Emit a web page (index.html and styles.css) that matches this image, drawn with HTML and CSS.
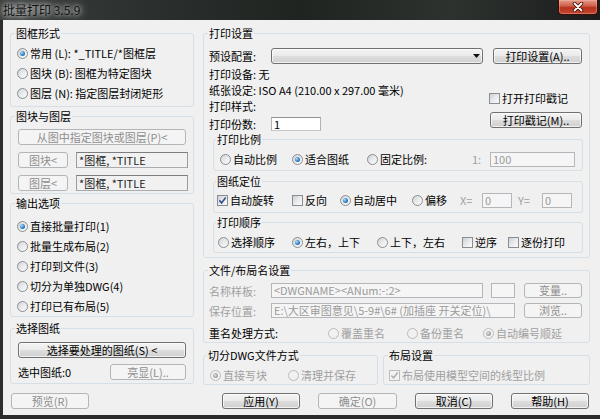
FILE: index.html
```html
<!DOCTYPE html>
<html lang="zh-CN">
<head>
<meta charset="utf-8">
<title>批量打印 3.5.9</title>
<link rel="stylesheet" href="styles.css">
</head>
<body>
<div class="window">
  <div class="titlebar">
    <span class="title">批量打印 3.5.9</span>
    <span class="close"><svg width="14" height="10" viewBox="0 0 14 10"><path d="M3.5 1.5 L10.5 8.5 M10.5 1.5 L3.5 8.5" stroke="#3b0a05" stroke-width="3.4" stroke-linecap="round"/><path d="M3.5 1.5 L10.5 8.5 M10.5 1.5 L3.5 8.5" stroke="#fff" stroke-width="1.8" stroke-linecap="round"/></svg></span>
  </div>
  <div class="frame">
    <div class="frame-left"></div>
    <div class="client">
      <div class="cols">
        <div class="col-left">
          <fieldset class="gb g1"><legend>图框形式</legend>
            <div class="gb-body">
              <div class="line20 opt"><span class="radio on"></span>常用 (L): *_TITLE/*图框层</div>
              <div class="line20 opt"><span class="radio"></span>图块 (B): 图框为特定图块</div>
              <div class="line20 opt"><span class="radio"></span>图层 (N): 指定图层封闭矩形</div>
            </div>
          </fieldset>
          <fieldset class="gb g2"><legend>图块与图层</legend>
            <div class="gb-body">
              <div class="btn dis w168">从图中指定图块或图层(P)&lt;</div>
              <div class="row16 mt7"><div class="btn dis w50">图块&lt;</div><div class="field ro w112 ml8">*图框, *TITLE</div></div>
              <div class="row16 mt7"><div class="btn dis w50">图层&lt;</div><div class="field ro w112 ml8">*图框, *TITLE</div></div>
            </div>
          </fieldset>
          <fieldset class="gb g3"><legend>输出选项</legend>
            <div class="gb-body">
              <div class="line20 opt"><span class="radio on"></span>直接批量打印(1)</div>
              <div class="line20 opt"><span class="radio"></span>批量生成布局(2)</div>
              <div class="line20 opt"><span class="radio"></span>打印到文件(3)</div>
              <div class="line20 opt"><span class="radio"></span>切分为单独DWG(4)</div>
              <div class="line20 opt"><span class="radio"></span>打印已有布局(5)</div>
            </div>
          </fieldset>
          <fieldset class="gb g4"><legend>选择图纸</legend>
            <div class="gb-body">
              <div class="btn w168">选择要处理的图纸(S) &lt;</div>
              <div class="row16 mt6"><span class="w92">选中图纸:0</span><div class="btn dis w76">亮显(L)..</div></div>
            </div>
          </fieldset>
        </div>
        <div class="col-right">
          <fieldset class="gb ps"><legend>打印设置</legend>
            <div class="gb-body">
              <div class="row16">
                <span class="lbl">预设配置:</span>
                <div class="combo w212"><svg width="7" height="4" viewBox="0 0 7 4"><path d="M0 0 H7 L3.5 4 Z" fill="#111"/></svg></div>
                <div class="btn w89 ml10">打印设置(A)..</div>
              </div>
              <div class="mid">
                <div class="mid-left">
                  <div class="ln16 mt2">打印设备: 无</div>
                  <div class="ln16">纸张设定: ISO A4 (210.00 x 297.00 毫米)</div>
                  <div class="ln16">打印样式:</div>
                  <div class="row14 mt3"><span class="lbl">打印份数:</span><div class="field w50 h14">1</div></div>
                </div>
                <div class="mid-right">
                  <div class="row14 mt27 opt"><span class="check"></span>打开打印戳记</div>
                  <div class="btn w92 ml1 mt7">打印戳记(M)..</div>
                </div>
              </div>
              <fieldset class="gb sub sg1"><legend>打印比例</legend>
                <div class="gb-body">
                  <div class="row16">
                    <div class="opt w72"><span class="radio"></span>自动比例</div>
                    <div class="opt w75"><span class="radio on"></span>适合图纸</div>
                    <div class="opt w105"><span class="radio"></span>固定比例:</div>
                    <span class="dis-text w18">1:</span>
                    <div class="field dis w85 h15">100</div>
                  </div>
                </div>
              </fieldset>
              <fieldset class="gb sub sg2"><legend>图纸定位</legend>
                <div class="gb-body">
                  <div class="row16">
                    <div class="opt w75"><span class="check"><svg width="9" height="9" viewBox="0 0 9 9"><path d="M1.4 4.4 L3.6 6.9 L7.7 1.5" stroke="#34508f" stroke-width="1.6" fill="none"/></svg></span>自动旋转</div>
                    <div class="opt w48"><span class="check"></span>反向</div>
                    <div class="opt w72"><span class="radio on"></span>自动居中</div>
                    <div class="opt w48"><span class="radio"></span>偏移</div>
                    <span class="dis-text w22">X=</span>
                    <div class="field dis w30 h15">0</div>
                    <span class="dis-text w30 pl6">Y=</span>
                    <div class="field dis w30 h15">0</div>
                  </div>
                </div>
              </fieldset>
              <fieldset class="gb sub sg3"><legend>打印顺序</legend>
                <div class="gb-body">
                  <div class="row16">
                    <div class="opt w74"><span class="radio"></span>选择顺序</div>
                    <div class="opt w85"><span class="radio on"></span>左右，上下</div>
                    <div class="opt w85"><span class="radio"></span>上下，左右</div>
                    <div class="opt w46"><span class="check"></span>逆序</div>
                    <div class="opt"><span class="check"></span>逐份打印</div>
                  </div>
                </div>
              </fieldset>
            </div>
          </fieldset>
          <fieldset class="gb fl"><legend>文件/布局名设置</legend>
            <div class="gb-body">
              <div class="row15">
                <span class="lbl dis-text">名称样板:</span>
                <div class="field dis w212 h15">&lt;DWGNAME&gt;&lt;ANum:-:2&gt;</div>
                <div class="field dis w24 h15 ml8"></div>
                <div class="btn dis w58 h15 ml9">变量..</div>
              </div>
              <div class="row15 mt5">
                <span class="lbl dis-text">保存位置:</span>
                <div class="field dis w244 h15">E:\大区审图意见\5-9#\6# (加插座 开关定位)\</div>
                <div class="btn dis w58 h15 ml9">浏览..</div>
              </div>
              <div class="row14 mt8">
                <span class="w119">重名处理方式:</span>
                <div class="opt w79 dis-text"><span class="radio dis"></span>覆盖重名</div>
                <div class="opt w76 dis-text"><span class="radio dis"></span>备份重名</div>
                <div class="opt dis-text"><span class="radio dis on"></span>自动编号顺延</div>
              </div>
            </div>
          </fieldset>
          <div class="gb-row">
            <fieldset class="gb cut"><legend>切分DWG文件方式</legend>
              <div class="gb-body">
                <div class="row16">
                  <div class="opt w78 dis-text"><span class="radio dis on"></span>直接写块</div>
                  <div class="opt dis-text"><span class="radio dis"></span>清理并保存</div>
                </div>
              </div>
            </fieldset>
            <fieldset class="gb lay"><legend>布局设置</legend>
              <div class="gb-body">
                <div class="row16">
                  <div class="opt dis-text"><span class="check dis"><svg width="9" height="9" viewBox="0 0 9 9"><path d="M1.4 4.4 L3.6 6.9 L7.7 1.5" stroke="#a9adb3" stroke-width="1.5" fill="none"/></svg></span>布局使用模型空间的线型比例</div>
                </div>
              </div>
            </fieldset>
          </div>
        </div>
      </div>
      <div class="bottom">
        <div class="btn dis w78 ml1">预览(R)</div>
        <div class="bottom-right">
          <div class="btn w78">应用(Y)</div>
          <div class="btn dis w79">确定(O)</div>
          <div class="btn w78">取消(C)</div>
          <div class="btn w78">帮助(H)</div>
        </div>
      </div>
    </div>
  </div>
  <div class="bottom-frame"></div>
</div>
</body>
</html>
```

FILE: styles.css
```css
* { box-sizing: border-box; }
html, body { margin: 0; padding: 0; }
body {
  width: 600px;
  height: 419px;
  overflow: hidden;
  background: #1d1f1e;
  font-family: "Noto Sans CJK SC", "Noto Sans", sans-serif;
  font-size: 11px;
  color: #000;
}
.window { width: 600px; height: 419px; display: flex; flex-direction: column; }

/* title bar */
.titlebar {
  height: 20px;
  flex: none;
  display: flex;
  align-items: flex-start;
  background: linear-gradient(90deg, #3a3e3c 0%, #2b2f2d 25%, #1f2421 50%, #2d322f 75%, #1b1d1c 100%);
}
.title {
  margin-left: 3px;
  line-height: 19px;
  font-size: 12px;
  color: #111;
  text-shadow: 0 0 4px rgba(235,235,235,.95), 0 0 8px rgba(220,220,220,.8), 0 0 12px rgba(200,200,200,.6);
}
.close {
  margin-left: auto;
  margin-right: 2px;
  width: 40px;
  height: 15px;
  border: 1px solid #3d0c07;
  border-top: none;
  border-radius: 0 0 4px 4px;
  background: linear-gradient(#e3998a 0%, #d0644f 40%, #b8321f 55%, #c2472c 100%);
  box-shadow: inset 0 0 0 1px rgba(255,200,190,.35);
  display: flex;
  align-items: center;
  justify-content: center;
}

/* frame */
.frame { flex: 1; display: flex; min-height: 0; }
.frame-left { width: 3px; background: #2b2d2c; }
.bottom-frame { height: 4px; flex: none; background: #2a2c2b; }
.client {
  flex: 1;
  background: #f0f0f0;
  padding: 7px 10px 0 7px;
  display: flex;
  flex-direction: column;
}
.cols { display: flex; gap: 9px; }
.col-left { width: 184px; display: flex; flex-direction: column; }
.col-right { width: 387px; display: flex; flex-direction: column; }

/* group boxes */
.gb {
  margin: 0;
  padding: 0;
  min-width: 0;
  border: 1px solid #d5dfe5;
  border-radius: 3px;
}
.gb > legend {
  padding: 0 1px;
  margin-left: 4px;
  height: 12px;
  line-height: 12px;
  font-size: 11px;
}
.g1 .gb-body { padding: 4px 0 3px 6px; }
.g2 { margin-top: 3px; }
.g2 .gb-body { padding: 7px 5px 2px 7px; }
.g3 { margin-top: 3px; }
.g3 .gb-body { padding: 7px 0 0 6px; }
.g4 { margin-top: 5px; }
.g4 .gb-body { padding: 8px 0 3px 7px; }

.ps .gb-body { padding: 9px 6px 4px 5px; }
.sub { margin-left: 4px; }
.sub > legend { margin-left: 2px; }
.sg1 { margin-top: 1px; }
.sg1 .gb-body { padding: 6px 0 3px 6px; }
.sg2 { margin-top: 4px; }
.sg2 .gb-body { padding: 5px 0 4px 3px; }
.sg3 { margin-top: 3px; }
.sg3 .gb-body { padding: 6px 0 2px 4px; }

.fl { margin-top: 6px; }
.fl .gb-body { padding: 7px 6px 2px 5px; }
.gb-row { display: flex; gap: 5px; margin-top: 6px; }
.cut { width: 175px; }
.cut > legend { margin-left: 3px; }
.cut .gb-body { padding: 6px 0 1px 6px; }
.lay { width: 207px; }
.lay .gb-body { padding: 6px 0 1px 5px; }

/* rows */
.line20 { height: 20px; }
.row16 { height: 16px; display: flex; align-items: center; }
.row15 { height: 15px; display: flex; align-items: center; }
.row14 { height: 14px; display: flex; align-items: center; }
.ln16 { height: 16px; line-height: 16px; white-space: nowrap; }
.mid { height: 68px; display: flex; }
.mid-left { flex: 1; }
.mid-right { width: 94px; }
.lbl { width: 62px; flex: none; white-space: nowrap; }

.opt { display: flex; align-items: center; white-space: nowrap; flex: none; }

/* radio / check */
.radio {
  flex: none;
  width: 11px;
  height: 11px;
  margin-right: 2px;
  border-radius: 50%;
  border: 1px solid #8b8e91;
  background: linear-gradient(135deg, #cfd2d5 0%, #e9ebed 50%, #fbfbfb 100%);
  display: grid;
  place-items: center;
}
.radio.on::after {
  content: "";
  width: 5px;
  height: 5px;
  border-radius: 50%;
  background: radial-gradient(circle at 35% 35%, #b4dcf8 0%, #3a85c8 50%, #0f4c8a 100%);
}
.radio.dis { border-color: #b9bcbf; background: #f1f1f1; }
.radio.dis.on::after { background: radial-gradient(circle at 40% 40%, #e0e0e0 0%, #a5a5a5 60%, #8c8c8c 100%); }
.check {
  flex: none;
  width: 11px;
  height: 11px;
  margin-right: 2px;
  border: 1px solid #8b8e91;
  background: linear-gradient(135deg, #cdd0d3 0%, #e8eaec 50%, #fbfbfb 100%);
  display: grid;
  place-items: center;
}
.check.dis { border-color: #babdc0; background: #f3f3f3; }

/* buttons */
.btn {
  flex: none;
  height: 16px;
  display: flex;
  align-items: center;
  justify-content: center;
  white-space: nowrap;
  border: 1px solid #707070;
  border-radius: 3px;
  background: linear-gradient(#f3f3f3 0%, #ebebeb 48%, #dddddd 52%, #d0d0d0 100%);
  box-shadow: inset 0 0 0 1px rgba(255,255,255,.7);
  line-height: 13px;
}
.btn.dis {
  border-color: #b2b6b9;
  background: #f4f4f4;
  box-shadow: none;
  color: #8e8e8e;
}
.combo {
  flex: none;
  height: 16px;
  border: 1px solid #707070;
  border-radius: 3px;
  background: linear-gradient(#f3f3f3 0%, #ebebeb 48%, #dddddd 52%, #d0d0d0 100%);
  box-shadow: inset 0 0 0 1px rgba(255,255,255,.7);
  display: flex;
  align-items: center;
  justify-content: flex-end;
  padding-right: 2px;
}

/* fields */
.field {
  flex: none;
  height: 16px;
  border: 1px solid;
  border-color: #8e9196 #b0b3b8 #c4c7cc #b0b3b8;
  background: #fff;
  padding: 0 2px;
  display: flex;
  align-items: center;
  white-space: nowrap;
  overflow: hidden;
  line-height: 13px;
}
.field.ro { background: #f1f1f1; border-color: #7b7d80 #9a9c9f #a9abae #9a9c9f; color: #222; }
.field.dis { background: #f5f5f5; border-color: #b3b6ba; color: #9b9b9b; }
.h14 { height: 14px; }
.h15 { height: 15px; }
.dis-text { color: #a0a0a0; }
span.dis-text { flex: none; white-space: nowrap; }

/* bottom */
.bottom { display: flex; margin-top: 8px; }
.bottom-right { margin-left: auto; margin-right: 1px; display: flex; gap: 18px; }

/* sizing helpers */
.w18 { width: 18px; } .w22 { width: 22px; } .w24 { width: 24px; } .w30 { width: 30px; }
.w46 { width: 46px; } .w48 { width: 48px; } .w50 { width: 50px; } .w58 { width: 58px; }
.w72 { width: 72px; } .w74 { width: 74px; } .w75 { width: 75px; } .w76 { width: 76px; }
.w78 { width: 78px; } .w79 { width: 79px; } .w85 { width: 85px; } .w89 { width: 89px; }
.w92 { width: 92px; flex: none; } .w105 { width: 105px; } .w112 { width: 112px; } .w119 { width: 119px; flex: none; }
.w168 { width: 168px; } .w212 { width: 212px; } .w244 { width: 244px; }
.ml1 { margin-left: 1px; } .ml8 { margin-left: 8px; } .ml9 { margin-left: 9px; } .ml10 { margin-left: 10px; }
.mt2 { margin-top: 2px; } .mt3 { margin-top: 3px; } .mt4 { margin-top: 4px; } .mt5 { margin-top: 5px; }
.mt6 { margin-top: 6px; } .mt7 { margin-top: 7px; } .mt8 { margin-top: 8px; } .mt27 { margin-top: 27px; }
.pl6 { padding-left: 6px; }
```
